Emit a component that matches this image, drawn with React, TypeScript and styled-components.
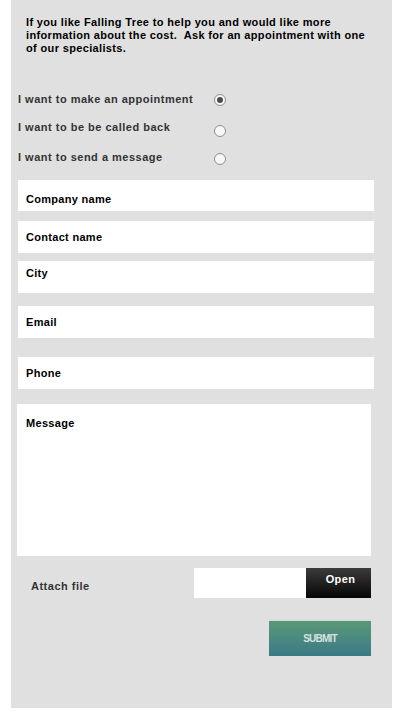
import React from "react";
import styled, { createGlobalStyle } from "styled-components";

const Global = createGlobalStyle`
  html, body { margin: 0; padding: 0; background: #ffffff; }
  body { font-family: "Liberation Sans", Arial, sans-serif; }
`;

const Panel = styled.div`
  margin-left: 11px;
  width: 381px;
  height: 708px;
  background: #e0e0e0;
  box-sizing: border-box;
  padding: 16px 18px 0 7px;
  display: flex;
  flex-direction: column;
`;

const Intro = styled.p`
  margin: 0 0 0 8px;
  font: bold 11px/13px "Liberation Sans", Arial, sans-serif;
  letter-spacing: 0.35px;
  color: #000;
  width: 350px;
`;

const Options = styled.div`
  margin-top: 38px;
  display: flex;
  flex-direction: column;
`;

const OptionRow = styled.label<{ $gap: number }>`
  display: flex;
  align-items: flex-start;
  margin-top: ${(p) => p.$gap}px;
  height: 16px;
`;

const OptionText = styled.span`
  width: 196px;
  font: bold 11px/13px "Liberation Sans", Arial, sans-serif;
  letter-spacing: 0.5px;
  color: #333;
`;

const Radio = styled.span<{ $checked?: boolean; $shift: number }>`
  width: 12px;
  height: 12px;
  margin-top: ${(p) => p.$shift}px;
  border-radius: 50%;
  box-sizing: border-box;
  border: 1px solid #8f8f8f;
  background: #f7f7f7;
  display: flex;
  align-items: center;
  justify-content: center;
  &::after {
    content: "";
    display: ${(p) => (p.$checked ? "block" : "none")};
    width: 6px;
    height: 6px;
    border-radius: 50%;
    background: #4a4a4a;
  }
`;

const Field = styled.div<{ $top: number; $h: number; $pt: number; $w?: number; $ml?: number; $pl?: number }>`
  margin-top: ${(p) => p.$top}px;
  margin-left: ${(p) => p.$ml ?? 0}px;
  width: ${(p) => p.$w ?? 356}px;
  height: ${(p) => p.$h}px;
  box-sizing: border-box;
  padding: ${(p) => p.$pt}px 0 0 ${(p) => p.$pl ?? 8}px;
  background: #fff;
  font: bold 11px/13px "Liberation Sans", Arial, sans-serif;
  letter-spacing: 0.3px;
  color: #000;
`;

const AttachRow = styled.div`
  margin-top: 12px;
  display: flex;
  align-items: flex-start;
  height: 30px;
`;

const AttachLabel = styled.span`
  width: 176px;
  box-sizing: border-box;
  padding: 12px 0 0 13px;
  font: bold 11px/13px "Liberation Sans", Arial, sans-serif;
  letter-spacing: 0.5px;
  color: #333;
`;

const FileBox = styled.div`
  width: 112px;
  height: 30px;
  background: #fff;
`;

const OpenButton = styled.div`
  width: 65px;
  height: 30px;
  box-sizing: border-box;
  padding: 5px 0 0 4px;
  text-align: center;
  background: linear-gradient(#3c3c3c, #050505);
  color: #fff;
  font: bold 11px/13px "Liberation Sans", Arial, sans-serif;
  letter-spacing: 0.4px;
`;

const SubmitRow = styled.div`
  margin-top: 22px;
  display: flex;
  justify-content: flex-end;
  padding-right: 3px;
`;

const SubmitButton = styled.div`
  width: 102px;
  height: 36px;
  box-sizing: border-box;
  border-top: 1px solid #d0dcd6;
  background: linear-gradient(#5b9878, #3a7a86);
  display: flex;
  align-items: center;
  justify-content: center;
  color: #d6e2e0;
  font: bold 10px "Liberation Sans", Arial, sans-serif;
  letter-spacing: -0.8px;
`;

export default function App() {
  return (
    <>
      <Global />
      <Panel>
        <Intro>
          If you like Falling Tree to help you and would like more information about the cost.&nbsp; Ask for an
          appointment with one of our specialists.
        </Intro>
        <Options>
          <OptionRow $gap={0}>
            <OptionText>I want to make an appointment</OptionText>
            <Radio $checked $shift={1} />
          </OptionRow>
          <OptionRow $gap={12}>
            <OptionText>I want to be be called back</OptionText>
            <Radio $shift={4} />
          </OptionRow>
          <OptionRow $gap={14}>
            <OptionText>I want to send a message</OptionText>
            <Radio $shift={2} />
          </OptionRow>
        </Options>
        <Field $top={13} $h={31} $pt={13}>Company name</Field>
        <Field $top={10} $h={32} $pt={10}>Contact name</Field>
        <Field $top={8} $h={32} $pt={6}>City</Field>
        <Field $top={13} $h={32} $pt={10}>Email</Field>
        <Field $top={19} $h={32} $pt={10}>Phone</Field>
        <Field $top={15} $h={152} $pt={13} $w={354} $ml={-1} $pl={9}>Message</Field>
        <AttachRow>
          <AttachLabel>Attach file</AttachLabel>
          <FileBox />
          <OpenButton>Open</OpenButton>
        </AttachRow>
        <SubmitRow>
          <SubmitButton>SUBMIT</SubmitButton>
        </SubmitRow>
      </Panel>
    </>
  );
}
